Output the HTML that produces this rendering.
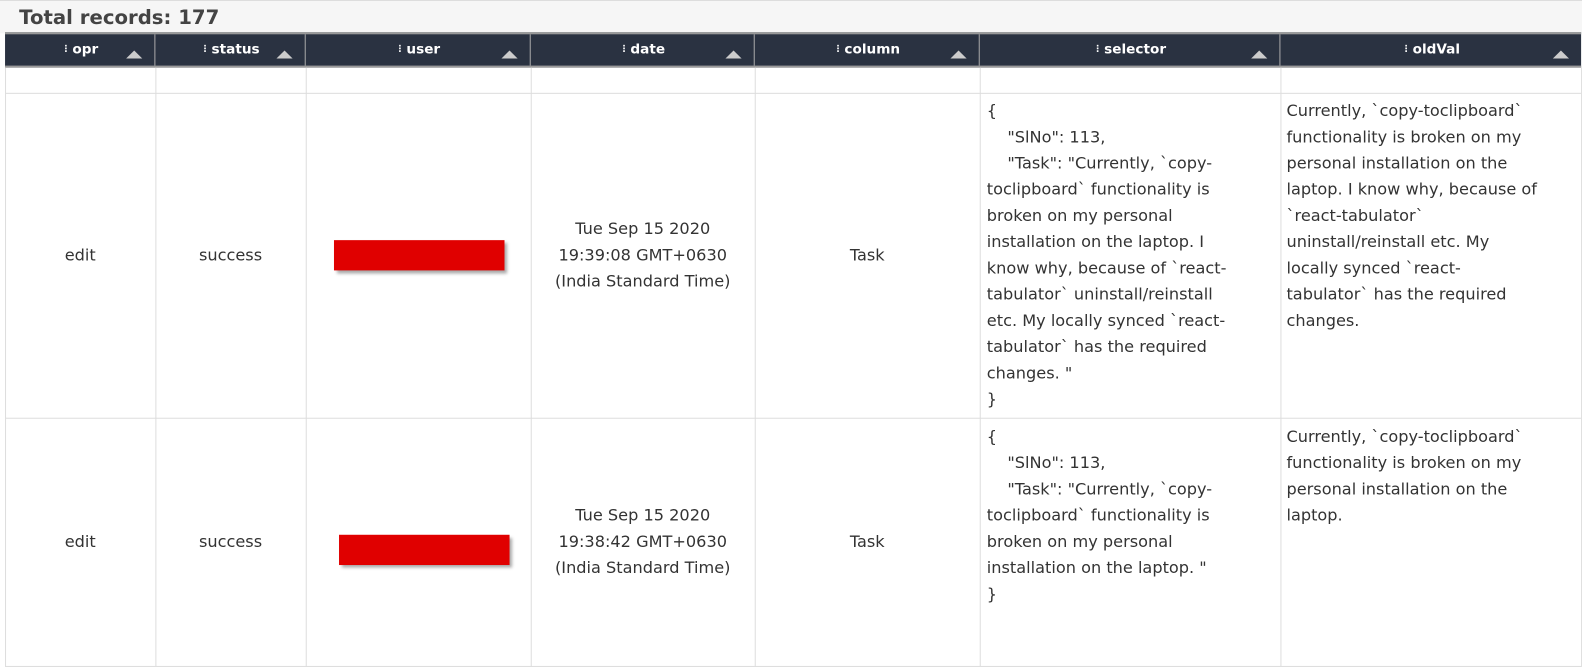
<!DOCTYPE html>
<html style="overflow:hidden;width:1582px;height:667px"><head><style>
*{margin:0;padding:0;box-sizing:border-box}
html,body{width:1582px;height:667px;overflow:hidden}
body{background:#fff;font-family:"DejaVu Sans","Liberation Sans",sans-serif;color:#333}
#w{position:relative;width:1582px;height:667px;overflow:hidden;transform:scale(1.009);transform-origin:0 0}
.top{position:absolute;left:0;top:0;width:1582px;height:33px;background:#f6f6f6;border-top:1px solid #ddd}
.title{position:absolute;left:19px;top:5px;font-size:19.5px;font-weight:bold;color:#444}
.hdr{position:absolute;top:32px;left:5px;width:1562px;height:35px;background:#2a3241;border-top:2px solid #999;border-bottom:2px solid #999}
.h{position:absolute;top:0;height:31px;border-right:1px solid #aaa;color:#fff;font-weight:bold;font-size:13.5px}
.h span{position:absolute;top:7px;left:0;right:0;text-align:center}
.h span:before{content:"⋮";font-size:9px;margin-right:2px;vertical-align:2px}
.tri{position:absolute;right:12px;top:16px;width:0;height:0;border-left:8px solid transparent;border-right:8px solid transparent;border-bottom:8px solid #ccc}
.v{position:absolute;top:67px;bottom:0;width:1px;background:#ddd}
.hl{position:absolute;left:5px;width:1562px;height:1px;background:#ddd}
.c{position:absolute;font-size:16px;line-height:26px;color:#333;white-space:nowrap}
.ctr{text-align:center}
.red{position:absolute;background:#e00000;box-shadow:3px 3px 3px #aaa}
</style></head><body><div id="w">
<div class="top"><div class="title">Total records: 177</div></div>
<div class="hdr">
<div class="h" style="left:0;width:149px"><span>opr</span><i class="tri"></i></div>
<div class="h" style="left:149px;width:149px"><span>status</span><i class="tri"></i></div>
<div class="h" style="left:298px;width:223px"><span>user</span><i class="tri"></i></div>
<div class="h" style="left:521px;width:222px"><span>date</span><i class="tri"></i></div>
<div class="h" style="left:743px;width:223px"><span>column</span><i class="tri"></i></div>
<div class="h" style="left:966px;width:298px"><span>selector</span><i class="tri"></i></div>
<div class="h" style="left:1264px;width:298px;border-right:none"><span>oldVal</span><i class="tri"></i></div>
</div>
<div class="v" style="left:5px"></div><div class="v" style="left:154px"></div><div class="v" style="left:303px"></div><div class="v" style="left:526px"></div><div class="v" style="left:748px"></div><div class="v" style="left:971px"></div><div class="v" style="left:1269px"></div><div class="v" style="left:1567px"></div>
<div class="hl" style="top:92px"></div><div class="hl" style="top:414px"></div><div class="hl" style="top:660px"></div>

<div class="c ctr" style="left:5px;width:149px;top:240px">edit</div>
<div class="c ctr" style="left:154px;width:149px;top:240px">success</div>
<div class="red" style="left:331px;top:238px;width:169px;height:30px"></div>
<div class="c ctr" style="left:526px;width:222px;top:214px">Tue Sep 15 2020<br>19:39:08 GMT+0630<br>(India Standard Time)</div>
<div class="c ctr" style="left:748px;width:223px;top:240px">Task</div>
<div class="c" style="left:978px;top:97px">{<br>&nbsp;&nbsp;&nbsp;&nbsp;"SlNo": 113,<br>&nbsp;&nbsp;&nbsp;&nbsp;"Task": "Currently, `copy-<br>toclipboard` functionality is<br>broken on my personal<br>installation on the laptop. I<br>know why, because of `react-<br>tabulator` uninstall/reinstall<br>etc. My locally synced `react-<br>tabulator` has the required<br>changes. "<br>}</div>
<div class="c" style="left:1275px;top:97px">Currently, `copy-toclipboard`<br>functionality is broken on my<br>personal installation on the<br>laptop. I know why, because of<br>`react-tabulator`<br>uninstall/reinstall etc. My<br>locally synced `react-<br>tabulator` has the required<br>changes.</div>

<div class="c ctr" style="left:5px;width:149px;top:524px">edit</div>
<div class="c ctr" style="left:154px;width:149px;top:524px">success</div>
<div class="red" style="left:336px;top:530px;width:169px;height:30px"></div>
<div class="c ctr" style="left:526px;width:222px;top:498px">Tue Sep 15 2020<br>19:38:42 GMT+0630<br>(India Standard Time)</div>
<div class="c ctr" style="left:748px;width:223px;top:524px">Task</div>
<div class="c" style="left:978px;top:420px">{<br>&nbsp;&nbsp;&nbsp;&nbsp;"SlNo": 113,<br>&nbsp;&nbsp;&nbsp;&nbsp;"Task": "Currently, `copy-<br>toclipboard` functionality is<br>broken on my personal<br>installation on the laptop. "<br>}</div>
<div class="c" style="left:1275px;top:420px">Currently, `copy-toclipboard`<br>functionality is broken on my<br>personal installation on the<br>laptop.</div>
</div></body></html>
